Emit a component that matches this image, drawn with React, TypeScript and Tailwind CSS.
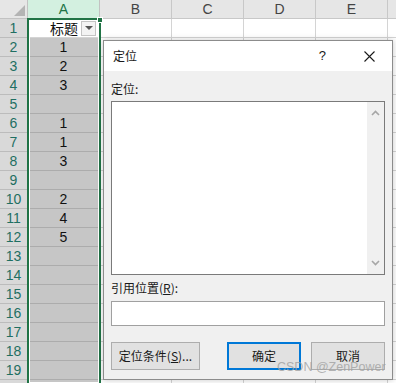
import React from 'react';

const cellValues = ['标题', '1', '2', '3', '', '1', '1', '3', '', '2', '4', '5', '', '', '', '', '', '', '', ''];
const otherCols = ['B', 'C', 'D', 'E'];

function ChevronUp() {
  return (
    <svg width="9" height="6" viewBox="0 0 9 6" fill="none">
      <path d="M1 5L4.5 1.5L8 5" stroke="#a6a6a6" strokeWidth="1.6" />
    </svg>
  );
}

function ChevronDown() {
  return (
    <svg width="9" height="6" viewBox="0 0 9 6" fill="none">
      <path d="M1 1L4.5 4.5L8 1" stroke="#a6a6a6" strokeWidth="1.6" />
    </svg>
  );
}

function GotoDialog() {
  return (
    <div className="absolute left-[103px] top-[40px] flex h-[340px] w-[290px] flex-col border border-[#8c8c8c] bg-[#f0f0f0] font-['Noto_Sans_CJK_SC',sans-serif] text-[12px] text-[#1a1a1a] shadow-[0_0_6px_rgba(0,0,0,0.22)]">
      <div className="flex h-[30px] items-center bg-white pl-[9px]">
        <span>定位</span>
        <span className="ml-auto mr-[38px] font-['Liberation_Sans',sans-serif] text-[13px]">?</span>
        <svg className="mr-[17px]" width="11" height="11" viewBox="0 0 11 11">
          <path d="M0.5 0.5L10.5 10.5M10.5 0.5L0.5 10.5" stroke="#1a1a1a" strokeWidth="1.1" />
        </svg>
      </div>

      <div className="flex flex-1 flex-col px-[7px]">
        <p className="mt-[10px] h-[16px] leading-[16px]">定位:</p>

        <div className="mt-[4px] flex h-[174px] border border-[#7a7a7a] bg-white">
          <div className="flex-1" />
          <div className="flex w-[17px] flex-col items-center justify-between bg-[#f0f0f0] py-[8px]">
            <ChevronUp />
            <ChevronDown />
          </div>
        </div>

        <p className="mt-[5px] h-[16px] leading-[16px]">
          引用位置(<span className="underline">R</span>):
        </p>

        <div className="mt-[5px] h-[25px] border border-[#a0a0a0] bg-white" />

        <div className="mt-[16px] flex h-[28px] items-stretch">
          <button className="w-[89px] border border-[#adadad] bg-[#e1e1e1] text-[12px]">
            定位条件(<span className="underline">S</span>)...
          </button>
          <button className="ml-auto w-[74px] border-2 border-[#0078d7] bg-[#e1e1e1] text-[12px]">
            确定
          </button>
          <button className="ml-[10px] w-[74px] border border-[#adadad] bg-[#e1e1e1] text-[12px]">
            取消
          </button>
        </div>
      </div>

      <span className="pointer-events-none absolute left-[173px] top-[318px] z-10 whitespace-nowrap font-['Liberation_Sans',sans-serif] text-[12.5px] leading-[16px] text-[#a0a0a0]/80">
        CSDN @ZenPower
      </span>
    </div>
  );
}

export default function App() {
  return (
    <div className="relative h-[383px] w-[396px] overflow-hidden bg-white font-['Liberation_Sans',sans-serif] text-[14px]">
      {/* column headers */}
      <div className="flex h-[19px]">
        <div className="relative w-[28px] border-b border-r border-[#c2c2c2] bg-[#e6e6e6]">
          <div className="absolute bottom-[2px] right-[2px] h-0 w-0 border-b-[11px] border-l-[11px] border-b-[#b4b4b4] border-l-transparent" />
        </div>
        <div className="flex w-[72px] items-center justify-center border-r border-[#c2c2c2] bg-[#d3f0e0] text-[#217346]">
          A
        </div>
        {otherCols.map((c) => (
          <div
            key={c}
            className="flex w-[72px] items-center justify-center border-b border-r border-[#c8c8c8] bg-[#e6e6e6] text-[#444]"
          >
            {c}
          </div>
        ))}
        <div className="flex-1 border-b border-[#c8c8c8] bg-[#e6e6e6]" />
      </div>

      {/* rows */}
      {cellValues.map((v, i) => (
        <div key={i} className="flex h-[19px]">
          <div className="flex w-[28px] items-center justify-center border-b border-r border-[#bcbcbc] bg-[#d9d9d9] text-[#1f6f62]">
            {i < 19 ? i + 1 : ''}
          </div>
          <div
            className={
              i === 0
                ? "flex w-[72px] items-center justify-center border-b border-r border-[#d4d4d4] bg-white text-[#111]"
                : "flex w-[72px] items-center justify-center border-b border-r border-[#acacac] bg-[#c6c6c6] text-[#111]"
            }
          >
            {i === 0 ? (
              <div className="flex w-full items-center">
                <span className="ml-[22px] font-['Noto_Sans_CJK_SC',sans-serif] text-[14px] leading-[18px]">{v}</span>
                <div className="ml-auto mr-[3px] flex h-[15px] w-[15px] items-center justify-center border border-[#c4c4c4] bg-[#f3f3f3]">
                  <div className="h-0 w-0 border-l-[4px] border-r-[4px] border-t-[4px] border-l-transparent border-r-transparent border-t-[#555]" />
                </div>
              </div>
            ) : (
              v
            )}
          </div>
          {otherCols.map((c) => (
            <div key={c} className="w-[72px] border-b border-r border-[#d4d4d4]" />
          ))}
          <div className="flex-1 border-b border-[#d4d4d4]" />
        </div>
      ))}

      {/* column A selection */}
      <div className="pointer-events-none absolute bottom-0 left-[27px] top-[18px] w-[74px] border-2 border-b-0 border-[#217346] shadow-[inset_0_0_0_1px_#ffffff]" />
      <div className="pointer-events-none absolute left-[97px] top-[17px] h-[6px] w-[6px] border border-white bg-[#217346]" />

      <GotoDialog />
    </div>
  );
}
